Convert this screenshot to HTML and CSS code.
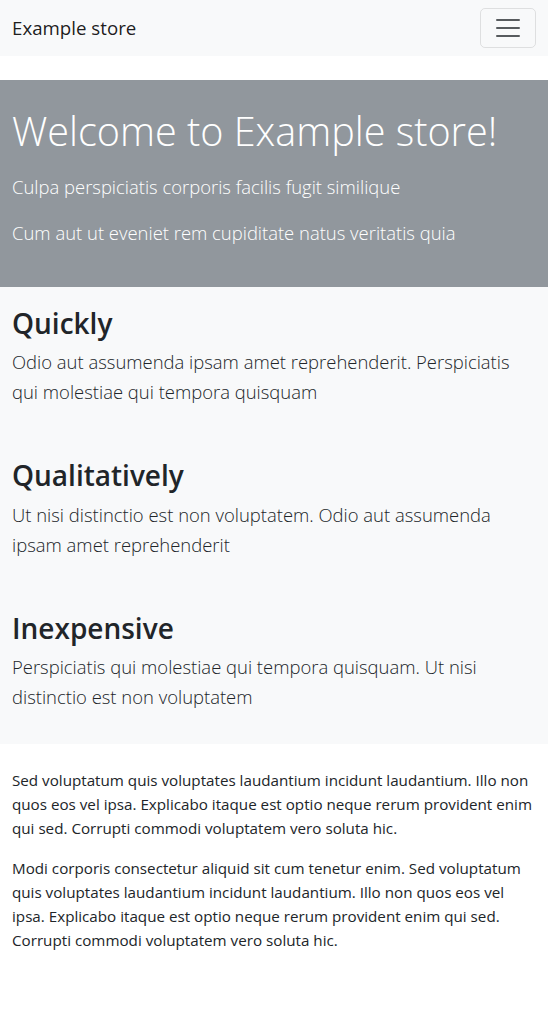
FILE: index.html
```html
<!DOCTYPE html>
<html lang="en">
<head>
<meta charset="utf-8">
<title>Example store</title>
<link rel="stylesheet" href="styles.css">
</head>
<body>
<nav class="navbar">
  <a class="brand" href="#">Example store</a>
  <button class="toggler" type="button" aria-label="Toggle navigation">
    <svg class="toggler-icon" width="30" height="30" viewBox="0 0 30 30"><path d="M4 7h22M4 15h22M4 23h22" stroke="rgba(33,37,41,0.75)" stroke-width="2" stroke-linecap="round" fill="none"/></svg>
  </button>
</nav>
<main>
  <section class="hero">
    <h1 class="hero-title">Welcome to Example store!</h1>
    <p class="lead">Culpa perspiciatis corporis facilis fugit similique</p>
    <p class="lead">Cum aut ut eveniet rem cupiditate natus veritatis quia</p>
  </section>
  <section class="features">
    <div class="feature">
      <h2 class="feature-title">Quickly</h2>
      <p class="lead">Odio aut assumenda ipsam amet reprehenderit. Perspiciatis qui molestiae qui tempora quisquam</p>
    </div>
    <div class="feature">
      <h2 class="feature-title">Qualitatively</h2>
      <p class="lead">Ut nisi distinctio est non voluptatem. Odio aut assumenda ipsam amet reprehenderit</p>
    </div>
    <div class="feature">
      <h2 class="feature-title">Inexpensive</h2>
      <p class="lead">Perspiciatis qui molestiae qui tempora quisquam. Ut nisi distinctio est non voluptatem</p>
    </div>
  </section>
  <section class="content">
    <p>Sed voluptatum quis voluptates laudantium incidunt laudantium. Illo non quos eos vel ipsa. Explicabo itaque est optio neque rerum provident enim qui sed. Corrupti commodi voluptatem vero soluta hic.</p>
    <p>Modi corporis consectetur aliquid sit cum tenetur enim. Sed voluptatum quis voluptates laudantium incidunt laudantium. Illo non quos eos vel ipsa. Explicabo itaque est optio neque rerum provident enim qui sed. Corrupti commodi voluptatem vero soluta hic.</p>
  </section>
</main>
</body>
</html>
```

FILE: styles.css
```css
* { box-sizing: border-box; }
html, body { margin: 0; padding: 0; }
body {
  font-family: "Open Sans", "Noto Sans", sans-serif;
  font-size: 15.2px;
  line-height: 24px;
  color: #212529;
  background: #fff;
}
p { margin: 0 0 16px; }
h1, h2 { margin: 0; }

.navbar {
  height: 56px;
  background: #f8f9fa;
  display: flex;
  align-items: center;
  justify-content: space-between;
  padding: 0 12px;
}
.brand {
  font-size: 18.7px;
  line-height: 30px;
  color: rgba(0,0,0,0.9);
  text-decoration: none;
}
.toggler {
  width: 56px;
  height: 40px;
  padding: 0;
  background: transparent;
  border: 1px solid rgba(0,0,0,0.1);
  border-radius: 5px;
  display: flex;
  align-items: center;
  justify-content: center;
}
.toggler-icon { display: block; }

.hero {
  margin-top: 24px;
  background: #91979d;
  color: #fff;
  padding: 28px 12px 23px;
}
.hero-title {
  font-size: 39.6px;
  font-weight: 300;
  line-height: 46.8px;
  margin-bottom: 17px;
}
.lead {
  font-size: 18.45px;
  font-weight: 300;
  line-height: 30px;
}

.features {
  background: #f8f9fa;
  padding: 0 12px;
}
.feature {
  padding: 20px 0 16px;
}
.feature-title {
  font-size: 28px;
  font-weight: 600;
  line-height: 32.4px;
  margin-bottom: 8px;
}

.content {
  padding: 24px 12px 0;
}
```
